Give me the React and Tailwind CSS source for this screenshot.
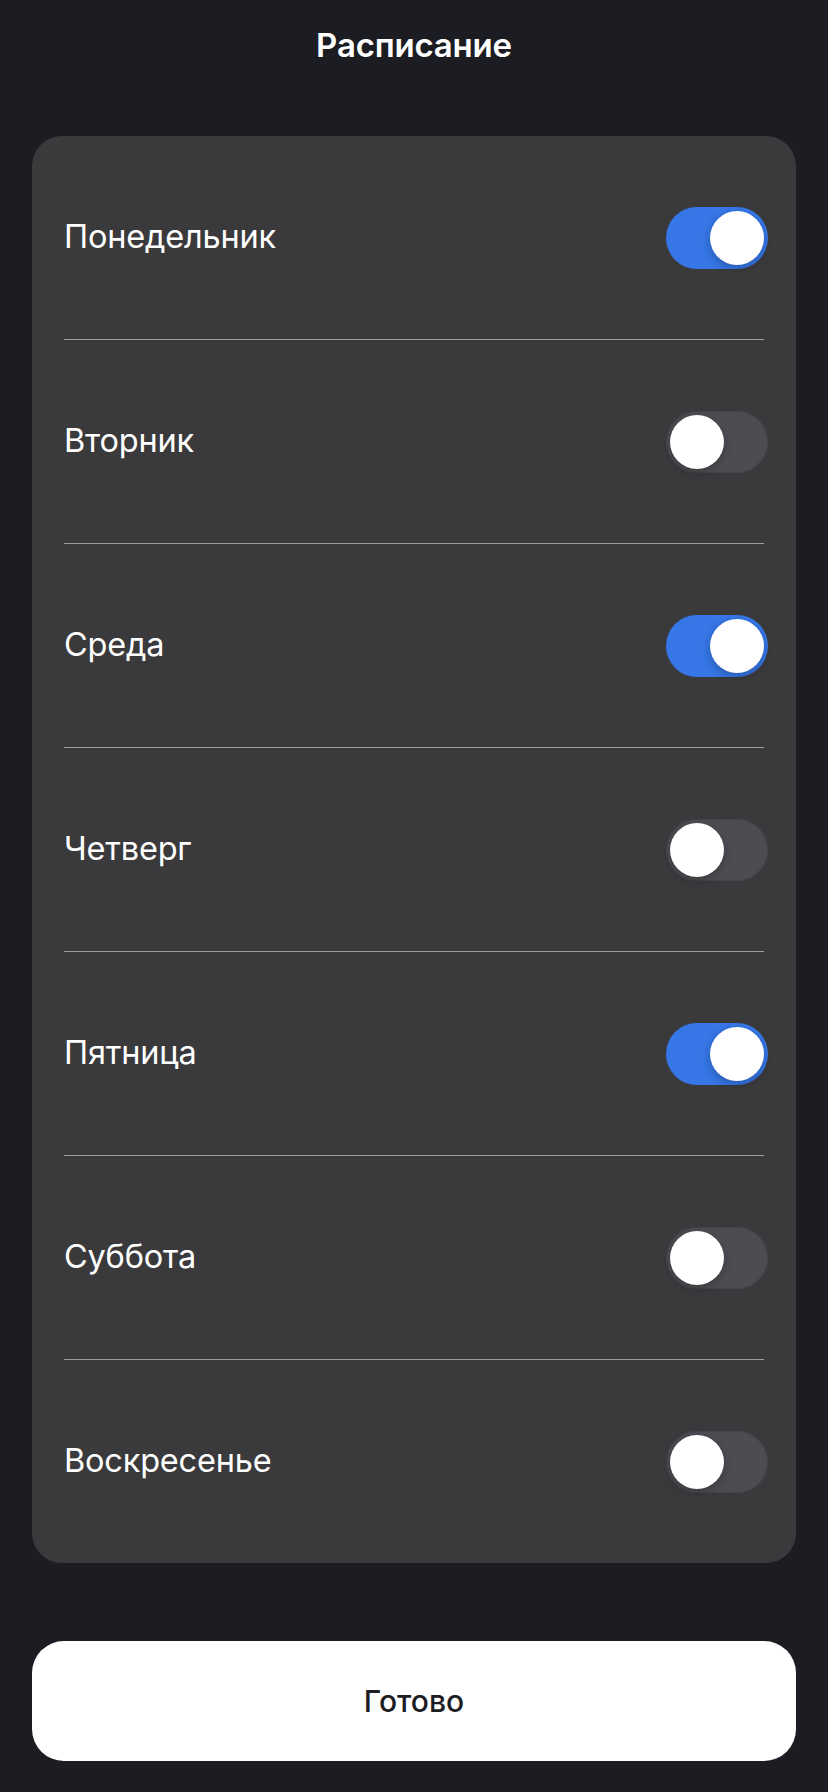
import { useState } from "react";

const DAYS = [
  { name: "Понедельник", on: true },
  { name: "Вторник", on: false },
  { name: "Среда", on: true },
  { name: "Четверг", on: false },
  { name: "Пятница", on: true },
  { name: "Суббота", on: false },
  { name: "Воскресенье", on: false },
];

function Toggle({ checked, onChange }) {
  return (
    <button
      onClick={onChange}
      className={
        "relative -mr-[4px] h-[62px] w-[102px] shrink-0 rounded-full transition-colors " +
        (checked ? "bg-[#3676e6]" : "bg-[#4d4c52] ring-1 ring-inset ring-[#44434a]")
      }
    >
      <span
        className={
          "absolute top-[4px] h-[54px] w-[54px] rounded-full bg-white shadow-[0_3px_8px_rgba(0,0,0,0.25)] transition-all " +
          (checked ? "left-[44px]" : "left-[4px]")
        }
      />
    </button>
  );
}

export default function App() {
  const [days, setDays] = useState(DAYS);

  const toggleDay = (index) => {
    setDays((prev) =>
      prev.map((d, i) => (i === index ? { ...d, on: !d.on } : d))
    );
  };

  return (
    <div className="min-h-[1792px] w-full bg-[#1c1c23] font-['Inter','Noto_Sans',sans-serif] text-white">
      <div className="flex h-[136px] justify-center pt-[25px]">
        <h1 className="text-[33px] font-semibold leading-[40px] tracking-[-0.2px]">
          Расписание
        </h1>
      </div>

      <div className="mx-[32px] rounded-[30px] bg-[#3a3a3c] px-[32px]">
        {days.map((day, index) => (
          <div key={day.name}>
            {index > 0 && <div className="h-px bg-[#9d9da0]" />}
            <div className="flex h-[203px] items-center justify-between">
              <span className="text-[32.5px] font-normal tracking-[-0.2px]">
                {day.name}
              </span>
              <Toggle checked={day.on} onChange={() => toggleDay(index)} />
            </div>
          </div>
        ))}
      </div>

      <div className="px-[32px] pt-[78px]">
        <button className="flex h-[120px] w-full items-center justify-center rounded-[32px] bg-white text-[30px] font-medium text-[#1c1c23]">
          Готово
        </button>
      </div>
    </div>
  );
}
